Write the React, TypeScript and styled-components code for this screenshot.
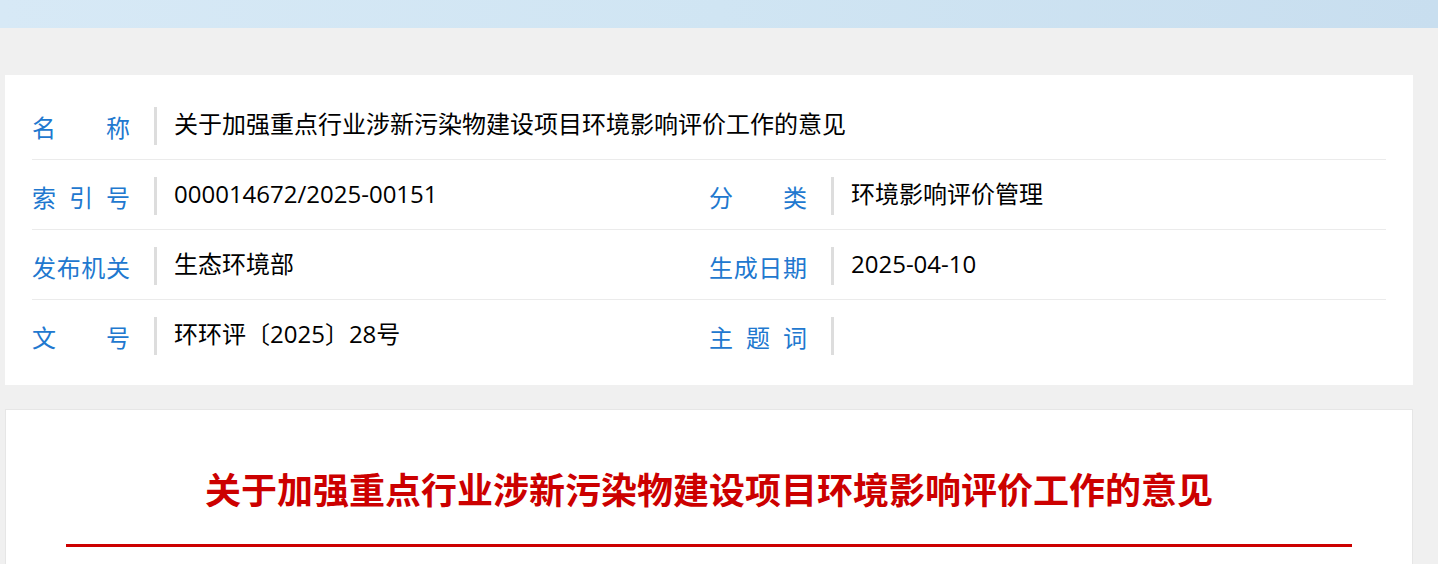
import styled, { createGlobalStyle } from "styled-components";

const GlobalStyle = createGlobalStyle`
  body {
    margin: 0;
    background: #f0f0f0;
    font-family: "Noto Sans CJK SC", "Noto Sans", sans-serif;
  }
`;

const TopBand = styled.div`
  height: 28px;
  background: linear-gradient(90deg, #d7e9f6 0%, #d0e5f3 50%, #c8deef 100%);
`;

const Main = styled.main`
  width: 1408px;
  margin: 47px 0 0 5px;
  display: flex;
  flex-direction: column;
  gap: 24px;
`;

const InfoCard = styled.section`
  background: #fff;
  padding: 15px 27px 15px;
`;

const Row = styled.div`
  display: grid;
  grid-template-columns: 1fr 1fr;
  height: 70px;
  box-sizing: border-box;
  border-bottom: 1px solid #ebebeb;

  &:last-child {
    border-bottom: none;
  }
`;

const Field = styled.div<{ $wide?: boolean }>`
  display: flex;
  align-items: center;
  padding-top: 2px;
  grid-column: ${(p) => (p.$wide ? "1 / span 2" : "auto")};
`;

const Label = styled.div`
  width: 98px;
  display: flex;
  justify-content: space-between;
  color: #2178cf;
  font-size: 24px;
  line-height: 1;
  padding-top: 2px;
`;

const Bar = styled.span`
  width: 3px;
  height: 38px;
  background: #dddddd;
  margin: 0 17px 0 24px;
`;

const Value = styled.div`
  color: #000;
  font-family: "Open Sans", "Noto Sans CJK SC", sans-serif;
  font-size: 24px;
  line-height: 1;
  margin-top: -4px;
`;

const ArticleCard = styled.section`
  background: #fff;
  border: 1px solid #e6e6e6;
  padding: 51px 60px 60px;
`;

const Title = styled.h1`
  margin: 0;
  text-align: center;
  color: #cc0000;
  font-size: 36px;
  line-height: 54px;
  font-weight: 700;
`;

const RedRule = styled.div`
  height: 3px;
  background: #cc0000;
  margin-top: 29px;
`;

const title = "关于加强重点行业涉新污染物建设项目环境影响评价工作的意见";

type Item = { label: string; value: string };

const rows: Item[][] = [
  [{ label: "名称", value: title }],
  [
    { label: "索引号", value: "000014672/2025-00151" },
    { label: "分类", value: "环境影响评价管理" },
  ],
  [
    { label: "发布机关", value: "生态环境部" },
    { label: "生成日期", value: "2025-04-10" },
  ],
  [
    { label: "文号", value: "环环评〔2025〕28号" },
    { label: "主题词", value: "" },
  ],
];

const InfoField = ({ item, wide }: { item: Item; wide?: boolean }) => (
  <Field $wide={wide}>
    <Label>
      {item.label.split("").map((c, i) => (
        <span key={i}>{c}</span>
      ))}
    </Label>
    <Bar />
    <Value>{item.value}</Value>
  </Field>
);

export default function App() {
  return (
    <>
      <GlobalStyle />
      <TopBand />
      <Main>
        <InfoCard>
          {rows.map((r, i) => (
            <Row key={i}>
              {r.map((item) => (
                <InfoField key={item.label} item={item} wide={r.length === 1} />
              ))}
            </Row>
          ))}
        </InfoCard>
        <ArticleCard>
          <Title>{title}</Title>
          <RedRule />
        </ArticleCard>
      </Main>
    </>
  );
}
